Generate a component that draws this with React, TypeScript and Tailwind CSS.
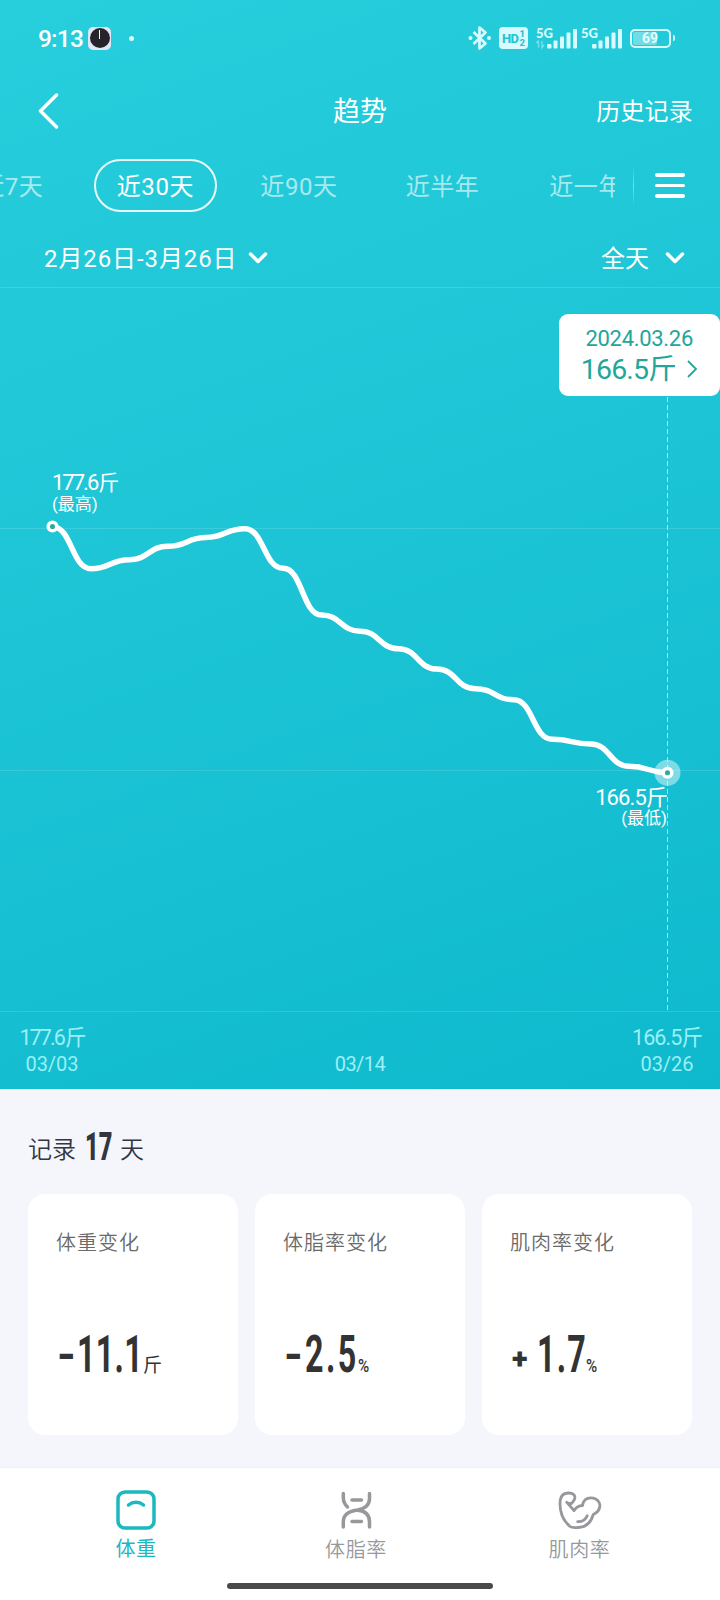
import React from "react";

type Change = {
  title: string;
  sign: string;
  signClass: string;
  value: string;
  valueClass: string;
  unit: string;
  unitClass: string;
};

const tabs = ["近7天", "近30天", "近90天", "近半年", "近一年"];

const weights = [
  526.7, 568.7, 559.7, 546.3, 537.5, 528.7, 568.3, 615, 631.2, 648.7, 669,
  688.7, 699.7, 739.3, 744, 766.3, 772.7,
];

const changes: Change[] = [
  {
    title: "体重变化",
    sign: "-",
    signClass: "w-[21px] pl-px text-[48px] font-bold -translate-y-px",
    value: "11.1",
    valueClass: "w-[66px] tracking-[0.5px]",
    unit: "斤",
    unitClass: "text-[19px]",
  },
  {
    title: "体脂率变化",
    sign: "-",
    signClass: "w-[22px] pl-px text-[48px] font-bold -translate-y-px",
    value: "2.5",
    valueClass: "w-[53px] tracking-[4px]",
    unit: "%",
    unitClass: "text-[19px] font-medium origin-left scale-x-80",
  },
  {
    title: "肌肉率变化",
    sign: "+",
    signClass: "w-[27px] pl-[2px] text-[29px] font-black -translate-y-[3px]",
    value: "1.7",
    valueClass: "w-[49px] tracking-[2px]",
    unit: "%",
    unitClass: "text-[19px] font-medium origin-left scale-x-80",
  },
];

const START_X = 52.5;
const STEP = 38.44;
const CHART_TOP = 287;

function buildPath() {
  return weights
    .map((w, i) => {
      const x = START_X + i * STEP;
      const y = w - CHART_TOP;
      if (i === 0) return `M${x} ${y}`;
      const mid = x - STEP / 2;
      return `C${mid} ${weights[i - 1] - CHART_TOP} ${mid} ${y} ${x} ${y}`;
    })
    .join(" ");
}

function Signal({ arrows }: { arrows?: boolean }) {
  return (
    <svg className="overflow-visible" width="42" height="24" viewBox="0 0 42 24" fill="#d9fbff">
      <text x="0" y="12" fontSize="13.500" fontWeight="900" textLength="17" lengthAdjust="spacingAndGlyphs" fontFamily="Lato, sans-serif">
        5G
      </text>
      {arrows && (
        <path d="M2.5 15v6.5M.5 17l2-2.500M6 15v6.500l2-2.500" stroke="#d9fbff" strokeOpacity="0.45" strokeWidth="1.5" fill="none" />
      )}
      <rect x="11" y="18" width="4.500" height="4.500" rx="1" />
      <rect x="17.500" y="14.500" width="4" height="8" rx="1" />
      <rect x="24" y="10.500" width="4" height="12" rx="1" />
      <rect x="30.500" y="6.500" width="4" height="16" rx="1" />
      <rect x="37" y="3" width="4" height="19.500" rx="1" />
    </svg>
  );
}

function StatusBar() {
  return (
    <div className="flex h-[76px] items-center pl-[38px] pr-[45px]">
      <span className="w-[50px] pt-[2px] text-[24.5px] font-medium leading-none tracking-[-0.8px]">9:13</span>
      <div className="flex h-[23px] w-[23px] items-center justify-center rounded-[5px] bg-[#e3e6f8]">
        <div className="flex h-[20px] w-[20px] justify-center rounded-full bg-[#25242a] pt-[2px]">
          <div className="h-[9px] w-px bg-white" />
        </div>
      </div>
      <div className="ml-[18px] h-[5px] w-[5px] rounded-full bg-[#d9fbff]" />
      <div className="ml-auto flex items-center">
        <svg width="24" height="26" viewBox="0 0 24 26" fill="none" stroke="#d9fbff" strokeWidth="2.700">
          <path d="M5.500 7l12 11.500-6 5V2.500l6 5L5.500 19" strokeLinejoin="round" />
          <circle cx="2.500" cy="13" r="2" fill="#d9fbff" stroke="none" />
          <circle cx="21" cy="13" r="2" fill="#d9fbff" stroke="none" />
        </svg>
        <div className="ml-[7px] flex h-[22px] w-[29px] items-center justify-center rounded-[4px] bg-[#d9fbff] text-[#23c4d4]">
          <span className="text-[13px] font-extrabold leading-none tracking-[-0.5px]">HD</span>
          <span className="ml-px flex flex-col text-[9.5px] font-extrabold leading-[9px]">
            <span>1</span>
            <span>2</span>
          </span>
        </div>
        <div className="ml-[8px] flex gap-[3px]">
          <Signal arrows />
          <Signal />
        </div>
        <div className="ml-[7px] flex h-[19px] w-[41px] items-center rounded-[5px] border-2 border-[#d9fbff] p-px">
          <div className="flex h-full w-[24px] items-center rounded-[2px] bg-white/35">
            <span className="pl-[9px] text-[14px] font-bold leading-none text-[#e5fdff]">69</span>
          </div>
        </div>
        <div className="ml-[2px] h-[6px] w-[2px] rounded-r bg-[#d9fbff]" />
      </div>
    </div>
  );
}

function Chevron() {
  return (
    <svg width="20" height="14" viewBox="0 0 20 14" fill="none" stroke="currentColor" strokeWidth="3.500" strokeLinecap="round" strokeLinejoin="round">
      <path d="M2.500 3l7.500 7.500L17.500 3" />
    </svg>
  );
}

function Header() {
  return (
    <div className="grid h-[69px] grid-cols-[1fr_auto_1fr] items-center pl-[37px] pr-[26px]">
      <svg width="23" height="36" viewBox="0 0 23 36" fill="none" stroke="currentColor" strokeWidth="3.500" strokeLinecap="round" strokeLinejoin="round">
        <path d="M19.500 2L3.500 18l16 16" />
      </svg>
      <span className="pr-[11px] pt-[3px] text-[27px] leading-none">趋势</span>
      <span className="pr-px pt-[2px] text-right text-[24px] leading-none tracking-[0.2px]">历史记录</span>
    </div>
  );
}

function RangeTabs() {
  return (
    <div className="flex h-[81px] items-center">
      <div className="w-[615px] overflow-hidden">
        <div className="-ml-[60px] flex">
          {tabs.map((tab, i) => (
            <div key={tab} className="flex w-[143.6px] shrink-0 justify-center">
              <span
                className={`flex h-[53px] items-center justify-center whitespace-nowrap pt-[2px] text-[24px] leading-none tracking-[0.6px] ${
                  i === 1 ? "w-[123px] rounded-full border-2 border-white/90" : "opacity-60"
                }`}
              >
                {tab}
              </span>
            </div>
          ))}
        </div>
      </div>
      <div className="ml-[18px] h-[42px] w-px bg-linear-to-b from-transparent via-white/40 to-transparent" />
      <div className="ml-[21px] flex flex-col gap-[7px]">
        <div className="h-[3.5px] w-[30px] rounded-full bg-white" />
        <div className="h-[3.5px] w-[30px] rounded-full bg-white" />
        <div className="h-[3.5px] w-[30px] rounded-full bg-white" />
      </div>
    </div>
  );
}

function Filters() {
  return (
    <div className="flex h-[61px] items-center justify-between pl-[44px] pr-[35px] pt-[3px]">
      <div className="flex items-center gap-[12px]">
        <span className="w-[192px] whitespace-nowrap pt-[2px] text-[24px] leading-none tracking-[0.9px]">2月26日-3月26日</span>
        <Chevron />
      </div>
      <div className="flex items-center gap-[16px]">
        <span className="pt-[2px] text-[24px] leading-none">全天</span>
        <Chevron />
      </div>
    </div>
  );
}

function Chart() {
  return (
    <div className="relative h-[725px]">
      <svg className="block" width="720" height="725" viewBox="0 0 720 725" fill="none">
        <path d="M0 .5H720M0 241.500H720M0 483.500H720M0 724.500H720" stroke="#fff" strokeOpacity="0.13" />
        <path d="M667.500 110V723" stroke="#fff" strokeOpacity="0.6" strokeDasharray="5 3" />
        <path d={buildPath()} stroke="#fff" strokeWidth="5.500" strokeLinecap="round" />
        <circle cx="52.500" cy="239.500" r="4.300" fill="#2cab9f" stroke="#fff" strokeWidth="3.500" />
        <circle cx="667.500" cy="485.700" r="13" fill="#fff" fillOpacity="0.45" />
        <circle cx="667.500" cy="485.700" r="4.300" fill="#2cab9f" stroke="#fff" strokeWidth="3.500" />
      </svg>

      <div className="absolute left-[52px] top-[184px] whitespace-nowrap">
        <p className="text-[22px] leading-[23px] tracking-[-2px]">
          177.6<span className="ml-px text-[21px]">斤</span>
        </p>
        <p className="text-[17px] leading-[18px]">(最高)</p>
      </div>
      <div className="absolute right-[53px] top-[499px] whitespace-nowrap text-right">
        <p className="text-[22px] leading-[23px] tracking-[-0.9px]">166.5斤</p>
        <p className="text-[17px] leading-[18px]">(最低)</p>
      </div>

      <div className="absolute right-0 top-[27px] flex h-[82px] w-[161px] flex-col items-end rounded-[9px] bg-white pr-[22px] pt-[11px] text-[#22a699]">
        <span className="pr-[5px] text-[22px] leading-[27px] tracking-[-0.3px]">2024.03.26</span>
        <div className="flex items-center gap-[10px]">
          <span className="pt-px text-[28.5px] leading-[33px] tracking-[-0.8px]">166.5斤</span>
          <svg width="12" height="18" viewBox="0 0 12 18" fill="none" stroke="currentColor" strokeWidth="1.800">
            <path d="M2 1l8 8-8 8" />
          </svg>
        </div>
      </div>
    </div>
  );
}

function AxisLabels() {
  return (
    <div className="flex h-[77px] justify-between px-[18px] pt-[13px] text-center text-[20px] leading-[26px] text-[#9af0f5]">
      <div className="w-[68px] whitespace-nowrap">
        <p className="text-[21.5px] tracking-[-1.9px]">
          177.6<span className="ml-px">斤</span>
        </p>
        <p>03/03</p>
      </div>
      <div className="pl-[2px] pt-[26px] tracking-[-0.5px]">03/14</div>
      <div className="w-[70px] whitespace-nowrap">
        <p className="text-[21.5px] tracking-[-0.9px]">166.5斤</p>
        <p>03/26</p>
      </div>
    </div>
  );
}

function ChangeCard({ item }: { item: Change }) {
  return (
    <div className="h-[241px] w-[210px] rounded-[17px] bg-white pl-[28px] pt-[37px]">
      <p className="text-[20px] font-[350] leading-[24px] tracking-[1px] text-[#6a6a6a]">{item.title}</p>
      <div className="mt-[74px] flex h-[52px] items-baseline text-[#333]">
        <span className={`leading-[52px] ${item.signClass}`}>{item.sign}</span>
        <span className={`origin-left scale-x-[0.62] whitespace-nowrap text-[52px] font-bold leading-[52px] ${item.valueClass}`}>
          {item.value}
        </span>
        <span className={`leading-[24px] ${item.unitClass}`}>{item.unit}</span>
      </div>
    </div>
  );
}

function Summary() {
  return (
    <section className="h-[378px] bg-[#f4f6fb] px-[28px] pt-[37px]">
      <div className="flex h-[42px] items-end text-[24px] font-[350] leading-[36px] text-[#333640]">
        <span>记录</span>
        <span className="ml-[9px] w-[35px] origin-left scale-x-[0.62] text-[38px] font-black leading-[42px]">17</span>
        <span>天</span>
      </div>
      <div className="mt-[26px] flex justify-between">
        {changes.map((item) => (
          <ChangeCard key={item.title} item={item} />
        ))}
      </div>
    </section>
  );
}

function BottomNav() {
  return (
    <nav className="flex h-[133px] flex-col items-center border-t border-[#eef0f3] bg-white text-[20px] font-[350] tracking-[0.6px] text-[#97989c]">
      <div className="flex h-[115px] w-full pl-[26px] pt-[22px]">
        <div className="flex w-[220px] flex-col items-center text-[#1cb8bf]">
          <svg width="40" height="40" viewBox="0 0 40 40" fill="none" stroke="currentColor" strokeWidth="3.500" strokeLinecap="round">
            <rect x="2" y="2" width="36" height="36" rx="7" />
            <path d="M12.500 15c4.500-3.800 10.500-3.800 15 0" />
          </svg>
          <span className="mt-[7px] font-normal leading-[24px]">体重</span>
        </div>
        <div className="flex w-[220px] flex-col items-center">
          <svg width="32" height="40" viewBox="0 0 32 40" fill="none" stroke="currentColor" strokeWidth="3.500" strokeLinecap="round">
            <path d="M3.300 3.500v4c0 4 1.500 7 4.200 9.500" />
            <path d="M29.500 3.500v5c0 6-4.500 10-11.500 11.500C8 21 3.300 25 3.300 32v5" />
            <path d="M18 20.200c7.500.8 11.500 5 11.500 11.800v5" />
            <path d="M12 10h9.500M12 31.500h9.500" />
          </svg>
          <span className="mt-[8px] leading-[24px]">体脂率</span>
        </div>
        <div className="flex w-[227px] flex-col items-center">
          <svg width="44" height="40" viewBox="0 0 44 40" fill="none" stroke="currentColor" strokeWidth="2.800" strokeLinecap="round" strokeLinejoin="round">
            <path d="M12 36.500C5.500 31 2 23 2 14 2 6.500 5 3 10.500 3c4.500 0 6.800 2 6.300 5.200-.3 2-1.800 3.300-3 5.100-1.600.4-3.400.2-5.100-1 2.300 2.400 4.800 5.200 7.300 8.400 1.800-3.200 4.500-5 8.500-5.200C25.200 10.500 28.500 7.800 33 7.800c5.500 0 9.500 4 8.800 8.700-.4 3.500-2.800 6.300-6.500 8C33 32 28 37.500 20 37.500c-3 0-6 .5-8-1z" />
            <path d="M19.700 31.700c4.300.2 8-2.200 9.500-6" />
          </svg>
          <span className="mt-[8px] leading-[24px]">肌肉率</span>
        </div>
      </div>
      <div className="h-[6px] w-[266px] rounded-full bg-[#4a4a4a]" />
    </nav>
  );
}

export default function App() {
  return (
    <div className="h-[1600px] w-[720px] overflow-hidden bg-white font-['Roboto','Noto_Sans_CJK_SC',sans-serif] font-normal">
      <div className="bg-[linear-gradient(160deg,#27cedc_0%,#1cc4d5_50%,#0fb9cd_100%)] text-white">
        <StatusBar />
        <Header />
        <RangeTabs />
        <Filters />
        <Chart />
        <AxisLabels />
      </div>
      <Summary />
      <BottomNav />
    </div>
  );
}
